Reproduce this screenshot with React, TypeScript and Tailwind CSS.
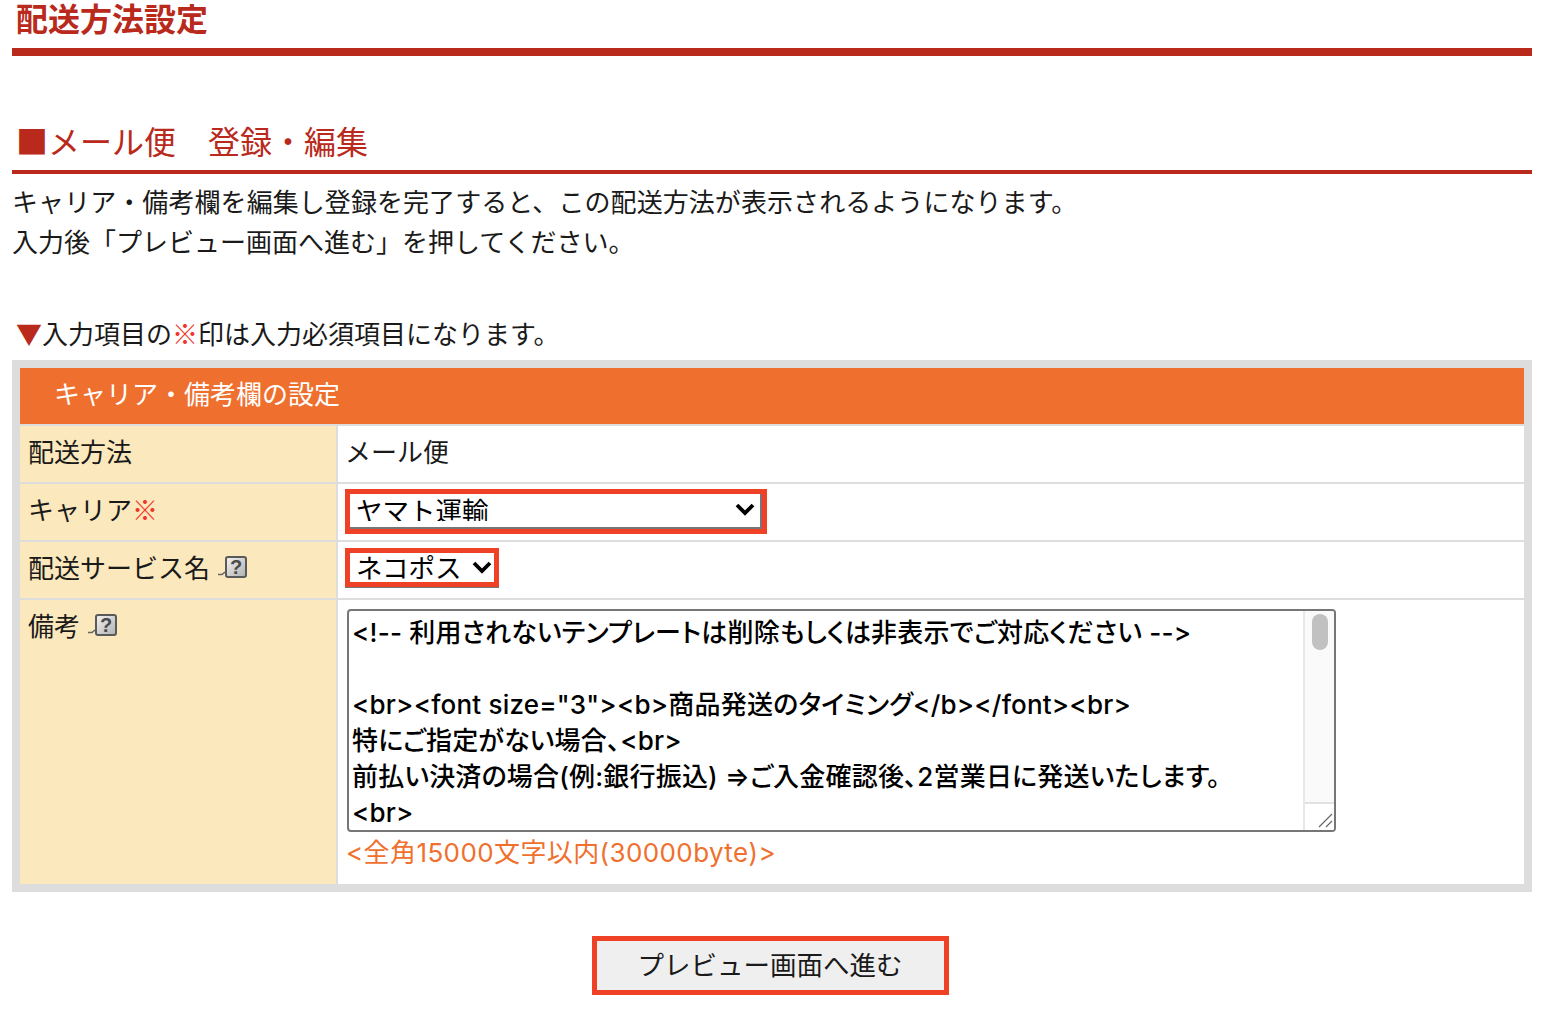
import React from "react";

const FONT = '"Noto Sans CJK JP", "Liberation Sans", sans-serif';
const HEAD = '"Liberation Sans", "Noto Sans CJK JP", sans-serif';
const MIXED = 'Inter, "Noto Sans CJK JP", sans-serif';

const TEXT = `<!-- 利用されないテンプレートは削除もしくは非表示でご対応ください -->

<br><font size="3"><b>商品発送のタイミング</b></font><br>
特にご指定がない場合、<br>
前払い決済の場合(例:銀行振込) ⇒ご入金確認後、2営業日に発送いたします。
<br>
後払い決済の場合 ⇒ご注文確認後、2営業日に発送いたします。`;

function Help() {
  return (
    <svg width="31" height="24" viewBox="0 0 31 24" className="ml-[7px] shrink-0" aria-hidden="true">
      <defs>
        <linearGradient id="hg" x1="0" y1="0" x2="1" y2="1">
          <stop offset="0" stopColor="#f4f4f4" />
          <stop offset="1" stopColor="#b0b0b0" />
        </linearGradient>
      </defs>
      <path d="M1 19.5h4l3-2.5" fill="none" stroke="#666" strokeWidth="1.6" />
      <rect x="9" y="2" width="20" height="20" rx="2" fill="url(#hg)" stroke="#5a5a5a" strokeWidth="2" />
      <text x="19" y="18.5" textAnchor="middle" fontSize="20" fontWeight="700" fill="#4a4a4a" fontFamily="Liberation Sans, sans-serif">?</text>
    </svg>
  );
}

function Chevron({ className }: { className: string }) {
  return (
    <svg width="20" height="14" viewBox="0 0 20 14" className={"pointer-events-none absolute -translate-y-1/2 " + className} aria-hidden="true">
      <path d="M2 3 L10 11 L18 3" fill="none" stroke="#000" strokeWidth="3.8" />
    </svg>
  );
}

function Label({ children }: { children: React.ReactNode }) {
  return <div className="bg-[#fbe8bc] pl-2 pt-[5px] flex items-start leading-10 text-[26px] text-[#1a1a1a]">{children}</div>;
}

function Cell({ children, className }: { children: React.ReactNode; className: string }) {
  return <div className={"bg-white " + className}>{children}</div>;
}

export default function App() {
  return (
    <div className="bg-white min-h-[1014px] pl-3 pr-[14px] text-[26px] leading-10 text-[#1a1a1a] overflow-hidden" style={{ fontFamily: FONT }}>
      <h1 className="h-14 border-b-8 border-[#b92a1c] pl-1 text-[32px] leading-10 font-bold text-[#b92a1c]" style={{ fontFamily: HEAD }}>配送方法設定</h1>

      <h2 className="mt-[66px] h-[52px] border-b-4 border-[#b92a1c] pl-1 text-[32px] leading-9 font-normal text-[#b92a1c]">■メール便　登録・編集</h2>

      <p className="mt-[7px] tracking-[0.07px]">キャリア・備考欄を編集し登録を完了すると、この配送方法が表示されるようになります。</p>
      <p>入力後「プレビュー画面へ進む」を押してください。</p>

      <p className="mt-[52px] pl-1">
        <span className="text-[#b92a1c]">▼</span>入力項目の<span className="text-[#f0342a]">※</span>印は入力必須項目になります。
      </p>

      <section className="mt-[7px] bg-[#dddddd] p-2 grid grid-cols-[316px_1fr] grid-rows-[56px_56px_56px_56px_284px] gap-[2px]">
        <div className="col-span-2 bg-[#ef6f2e] pl-[34px] pb-[7px] flex items-center text-white">キャリア・備考欄の設定</div>

        <Label>配送方法</Label>
        <Cell className="pl-[7px] pt-[5px]">メール便</Cell>

        <Label>
          キャリア<span className="text-[#f0342a]">※</span>
        </Label>
        <Cell className="pl-[7px] pt-[5px]">
          <div className="relative w-[422px] h-[45px] border-[5px] border-[#ee4125]">
            <select className="appearance-none block w-full h-full bg-white border-r-2 border-b-2 border-[#767676] pl-[6px] pb-[6px] text-[26.5px] leading-8 text-black outline-none" style={{ fontFamily: FONT }} defaultValue="yamato">
              <option value="yamato">ヤマト運輸</option>
            </select>
            <Chevron className="top-[15px] right-[7px]" />
          </div>
        </Cell>

        <Label>
          配送サービス名
          <span className="mt-2"><Help /></span>
        </Label>
        <Cell className="pl-[7px] pt-[6px]">
          <div className="relative w-[154px] h-[39px] border-[5px] border-[#ee4125] bg-white shadow-[0_1px_0_#767676]">
            <select className="appearance-none block w-full h-[34px] -mt-[3px] bg-transparent pl-[6px] text-[26.5px] leading-8 text-black outline-none" style={{ fontFamily: FONT }} defaultValue="nekopos">
              <option value="nekopos">ネコポス</option>
            </select>
            <Chevron className="top-[14px] right-[2px]" />
          </div>
        </Cell>

        <Label>
          備考
          <span className="mt-2"><Help /></span>
        </Label>
        <Cell className="pl-[9px] pt-[9px]">
          <div className="relative w-[989px] h-[223px] rounded-[4px] border-2 border-[#767676] overflow-hidden">
            <textarea
              readOnly
              value={TEXT}
              className="block w-[956px] h-full resize-none overflow-hidden outline-none pl-[3px] pt-1 text-[26px] leading-9 font-medium tracking-[0.2px] text-black [font-feature-settings:'palt','calt'_0]"
              style={{ fontFamily: MIXED }}
            />
            <div className="absolute right-0 top-0 bottom-0 w-[31px] bg-[#fafafa] border-l-2 border-[#e8e8e8]">
              <div className="absolute left-[7px] top-[3px] w-4 h-9 rounded-lg bg-[#c1c1c1]" />
              <div className="absolute left-0 right-0 bottom-0 h-7 border-t-2 border-[#e2e2e2] bg-white">
                <svg width="24" height="22" viewBox="0 0 24 22" className="absolute right-0 bottom-0" aria-hidden="true">
                  <path d="M9 19 L22 6 M16 19 L22 13" fill="none" stroke="#666" strokeWidth="1.2" />
                </svg>
              </div>
            </div>
          </div>
          <div className="mt-[1px] -ml-[1px] tracking-[0.4px] text-[#f0702e]" style={{ fontFamily: MIXED }}>&lt;全角15000文字以内(30000byte)&gt;</div>
        </Cell>
      </section>

      <div className="mt-11 pr-1 flex justify-center">
        <button type="button" className="w-[357px] h-[59px] border-[5px] border-[#ee4125] bg-[#efefef] pb-[3px] text-[26.5px] text-[#1a1a1a]" style={{ fontFamily: FONT }}>
          プレビュー画面へ進む
        </button>
      </div>
    </div>
  );
}
